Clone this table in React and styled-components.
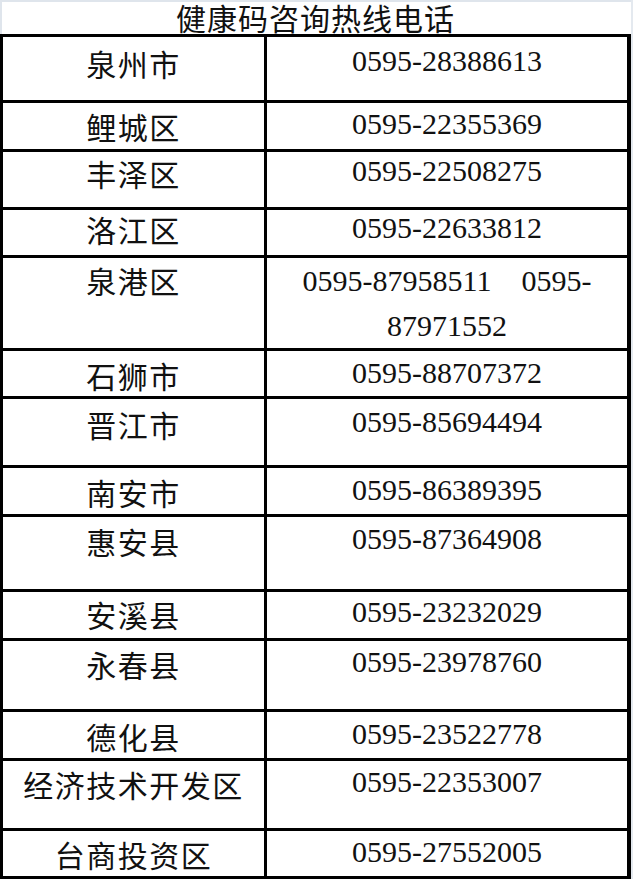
import styled, { createGlobalStyle } from "styled-components";

const GlobalStyle = createGlobalStyle`
  html, body {
    margin: 0;
    padding: 0;
    background: #ffffff;
  }
`;

const ROWS = [
  { name: "泉州市", phone: ["0595-28388613"], h: 63, pad: 8 },
  { name: "鲤城区", phone: ["0595-22355369"], h: 46, pad: 5 },
  { name: "丰泽区", phone: ["0595-22508275"], h: 55, pad: 3 },
  { name: "洛江区", phone: ["0595-22633812"], h: 45, pad: 1 },
  { name: "泉港区", phone: ["0595-87958511\u00a0\u00a0\u00a0\u00a00595-", "87971552"], h: 89, pad: 4 },
  { name: "石狮市", phone: ["0595-88707372"], h: 45, pad: 6 },
  { name: "晋江市", phone: ["0595-85694494"], h: 66, pad: 7 },
  { name: "南安市", phone: ["0595-86389395"], h: 46, pad: 6 },
  { name: "惠安县", phone: ["0595-87364908"], h: 72, pad: 6 },
  { name: "安溪县", phone: ["0595-23232029"], h: 46, pad: 4 },
  { name: "永春县", phone: ["0595-23978760"], h: 68, pad: 5 },
  { name: "德化县", phone: ["0595-23522778"], h: 46, pad: 6 },
  { name: "经济技术开发区", phone: ["0595-22353007"], h: 67, pad: 5 },
  { name: "台商投资区", phone: ["0595-27552005"], h: 45, pad: 5 },
];

/* Page */

const Page = styled.div`
  width: 633px;
  padding-right: 2px;
  box-sizing: border-box;
  background: #e4e9ef;
  display: flex;
  flex-direction: column;
`;

/* Title */

const Title = styled.div`
  height: 34px;
  box-sizing: border-box;
  padding-top: 1px;
  background: #ffffff;
  box-shadow: inset 2px 2px 0 #dfe5ec;
  text-align: center;
  font-family: "Noto Sans CJK SC", sans-serif;
  font-size: 30px;
  line-height: 33px;
  letter-spacing: 1px;
  color: #111111;
`;

/* Table */

const Table = styled.div`
  display: grid;
  grid-template-columns: 261px 360px;
  gap: 3px;
  padding: 3px 4px 3px 3px;
  background: #000000;
`;

const Cell = styled.div`
  min-height: ${(p) => p.$h}px;
  box-sizing: border-box;
  padding-top: ${(p) => p.$pad}px;
  background: #ffffff;
  text-align: center;
  color: #111111;
  font-size: 30px;
  line-height: 36px;
`;

const NameCell = styled(Cell)`
  font-family: "Noto Sans CJK SC", sans-serif;
  letter-spacing: 1.5px;
`;

const PhoneCell = styled(Cell)`
  font-family: "Liberation Serif", "Noto Sans CJK SC", serif;
  line-height: ${(p) => (p.$multi ? 45 : 36)}px;
`;

const PhoneLine = styled.div`
  white-space: nowrap;
`;

export default function App() {
  return (
    <>
      <GlobalStyle />
      <Page>
        <Title>健康码咨询热线电话</Title>
        <Table>
          {ROWS.map((row) => {
            const multi = row.phone.length > 1;
            return [
              <NameCell key={row.name + "-n"} $h={row.h} $pad={row.pad}>
                {row.name}
              </NameCell>,
              <PhoneCell
                key={row.name + "-p"}
                $h={row.h}
                $pad={multi ? 0 : Math.max(row.pad - 2, 0)}
                $multi={multi}
              >
                {row.phone.map((line) => (
                  <PhoneLine key={line}>{line}</PhoneLine>
                ))}
              </PhoneCell>,
            ];
          })}
        </Table>
      </Page>
    </>
  );
}
